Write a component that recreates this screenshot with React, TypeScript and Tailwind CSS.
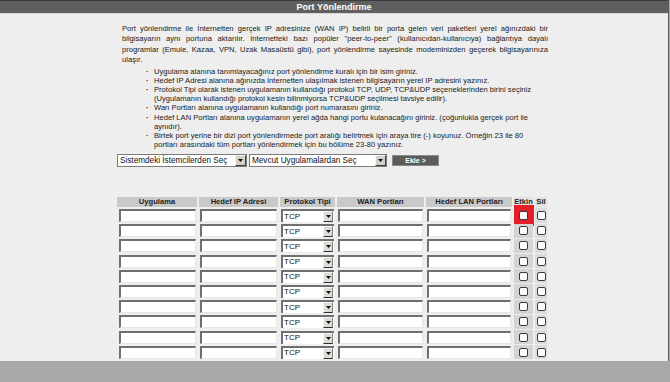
import React from 'react';

// Small down-arrow button used by the old-style select boxes
const DropArrow: React.FC<{ size?: 'sm' | 'md' }> = ({ size = 'md' }) => (
    <span
        className={
            size === 'md'
                ? 'flex items-center justify-center w-[11px] h-[11px] bg-[#d4d0c8] border border-t-[#f4f4f4] border-l-[#f4f4f4] border-b-[#404040] border-r-[#404040]'
                : 'flex items-center justify-center w-[10px] h-[11px] bg-[#dedbd4] border border-t-[#f4f4f4] border-l-[#f4f4f4] border-b-[#303030] border-r-[#808080]'
        }
    >
        <svg width="5" height="3" viewBox="0 0 5 3">
            <polygon points="0,0 5,0 2.5,3" fill="#111" />
        </svg>
    </span>
);

const TextBox: React.FC = () => (
    <input
        type="text"
        readOnly
        className="block w-full h-[13px] bg-white outline-none border-t-2 border-l-2 border-b border-r border-t-[#6f6f6f] border-l-[#6f6f6f] border-b-[#e6e6e6] border-r-[#e6e6e6]"
    />
);

const CheckBox: React.FC = () => (
    <span className="block w-[9px] h-[9px] bg-white border border-[#3a3a3a] rounded-[2px]" />
);

const bullets: React.ReactNode[] = [
    'Uygulama alanına tanımlayacağınız port yönlendirme kuralı için bir isim giriniz.',
    'Hedef IP Adresi alanına ağınızda İnternetten ulaşılmak istenen bilgisayarın yerel IP adresini yazınız.',
    <>
        Protokol Tipi olarak istenen uygulamanın kullandığı protokol TCP, UDP, TCP&amp;UDP seçeneklerinden birini seçiniz
        <br />
        (Uygulamanın kullandığı protokol kesin bilinmiyorsa TCP&amp;UDP seçilmesi tavsiye edilir).
    </>,
    'Wan Portları alanına uygulamanın kullandığı port numarasını giriniz.',
    <>
        Hedef LAN Portları alanına uygulamanın yerel ağda hangi portu kulanacağını giriniz. (çoğunlukla gerçek port ile
        <br />
        aynıdır).
    </>,
    <>
        Birtek port yerine bir dizi port yönlendirmede port aralığı belirtmek için araya tire (-) koyunuz. Örneğin 23 ile 80
        <br />
        portları arasındaki tüm portları yönlendirmek için bu bölüme 23-80 yazınız.
    </>,
];

const headers = ['Uygulama', 'Hedef IP Adresi', 'Protokol Tipi', 'WAN Portları', 'Hedef LAN Portları'];

const App: React.FC = () => {
    return (
        <div className="w-[670px] h-[382px] overflow-hidden bg-[#a8a8a8] font-['Liberation_Sans',Arial,sans-serif]">
            <div className="h-[361px] w-[669px] bg-[#eeeeee] border-r border-[#5c5c5c]">
                {/* Title bar */}
                <div className="h-[14px] border-t border-[#3c3c3c] bg-[#5f5f5f] border-b border-b-[#d8d8d8]">
                    <p className="text-center text-white font-bold text-[9px] leading-[12px]">Port Yönlendirme</p>
                </div>

                {/* Description */}
                <div className="ml-[122px] w-[426px] mt-[10px] text-[7.6px] leading-[10.3px] text-[#1a1a1a]">
                    <p className="text-justify [text-align-last:justify] whitespace-nowrap">
                        Port yönlendirme ile İnternetten gerçek IP adresinize (WAN IP) belirli bir porta gelen veri paketleri yerel ağınızdaki bir
                    </p>
                    <p className="text-justify [text-align-last:justify]">
                        bilgisayarın aynı portuna aktarılır. İnternetteki bazı popüler "peer-to-peer" (kullanıcıdan-kullanıcıya) bağlantıya dayalı
                    </p>
                    <p className="text-justify [text-align-last:justify]">
                        programlar (Emule, Kazaa, VPN, Uzak Masaüstü gibi), port yönlendirme sayesinde modeminizden geçerek bilgisayarınıza
                    </p>
                    <p>ulaşır.</p>

                    <ul className="mt-[1.4px] ml-[24px] leading-[9.2px]">
                        {bullets.map((b, i) => (
                            <li key={i} className="flex">
                                <span className="w-[8px] shrink-0 font-bold">·</span>
                                <span className="whitespace-nowrap">{b}</span>
                            </li>
                        ))}
                    </ul>
                </div>

                {/* Select row */}
                <div className="ml-[117px] mt-[5px] flex items-start">
                    <div className="w-[130px] h-[13px] bg-white border border-[#7b7b7b] flex items-center justify-between pl-[2px]">
                        <span className="text-[8.2px] leading-[11px] text-[#111] whitespace-nowrap">Sistemdeki İstemcilerden Seç</span>
                        <DropArrow />
                    </div>
                    <div className="ml-[2px] w-[138px] h-[13px] bg-white border border-[#7b7b7b] flex items-center justify-between pl-[2px]">
                        <span className="text-[8.2px] leading-[11px] text-[#111] whitespace-nowrap">Mevcut Uygulamalardan Seç</span>
                        <DropArrow />
                    </div>
                    <button className="ml-[5px] mt-[1px] w-[47px] h-[11px] bg-[#5c5c5c] border border-[#8a8a8a] text-white text-[7px] leading-[9px] font-bold">
                        Ekle &gt;
                    </button>
                </div>

                {/* Rules table */}
                <div className="ml-[117px] mt-[30px] grid grid-cols-[80px_79px_55px_87px_86px_19px_12px] gap-x-[2px] gap-y-[1px] auto-rows-[14.2px] [grid-template-rows:10px]">
                    {headers.map((h) => (
                        <div key={h} className="h-[10px] bg-[#c9c9c9] text-center text-[7.6px] leading-[10px] font-bold text-[#222] whitespace-nowrap">
                            {h}
                        </div>
                    ))}
                    <div className="h-[10px] text-center text-[7.6px] leading-[10px] font-bold text-[#222] bg-[#e2e2e2]">Etkin</div>
                    <div className="h-[10px] text-center text-[7.6px] leading-[10px] font-bold text-[#222] bg-[#e2e2e2]">Sil</div>

                    {Array.from({ length: 10 }).map((_, i) => (
                        <React.Fragment key={i}>
                            <div className="flex items-center pl-[2px] pr-[1px]"><TextBox /></div>
                            <div className="flex items-center pl-[1px] pr-[1px]"><TextBox /></div>
                            <div className="flex items-center pl-[1px] pr-[1px]">
                                <div className="w-full h-[13px] bg-white border-t-2 border-l-2 border-t-[#6f6f6f] border-l-[#6f6f6f] flex items-center justify-between pr-[1px]">
                                    <span className="pl-[1px] text-[8px] leading-[10px] text-[#111]">TCP</span>
                                    <DropArrow size="sm" />
                                </div>
                            </div>
                            <div className="flex items-center pl-[1px] pr-[1px]"><TextBox /></div>
                            <div className="flex items-center pl-[1px] pr-[1px]"><TextBox /></div>
                            <div className="relative flex items-center justify-center bg-[#d4d4d4]">
                                {i === 0 && (
                                    <span className="absolute -top-[3px] -bottom-[3px] left-0 -right-[1px] bg-[#e3202a]" />
                                )}
                                <span className="relative"><CheckBox /></span>
                            </div>
                            <div className="flex items-center justify-center bg-[#dcdcdc]">
                                <CheckBox />
                            </div>
                        </React.Fragment>
                    ))}
                </div>
            </div>
        </div>
    );
};

export default App;
